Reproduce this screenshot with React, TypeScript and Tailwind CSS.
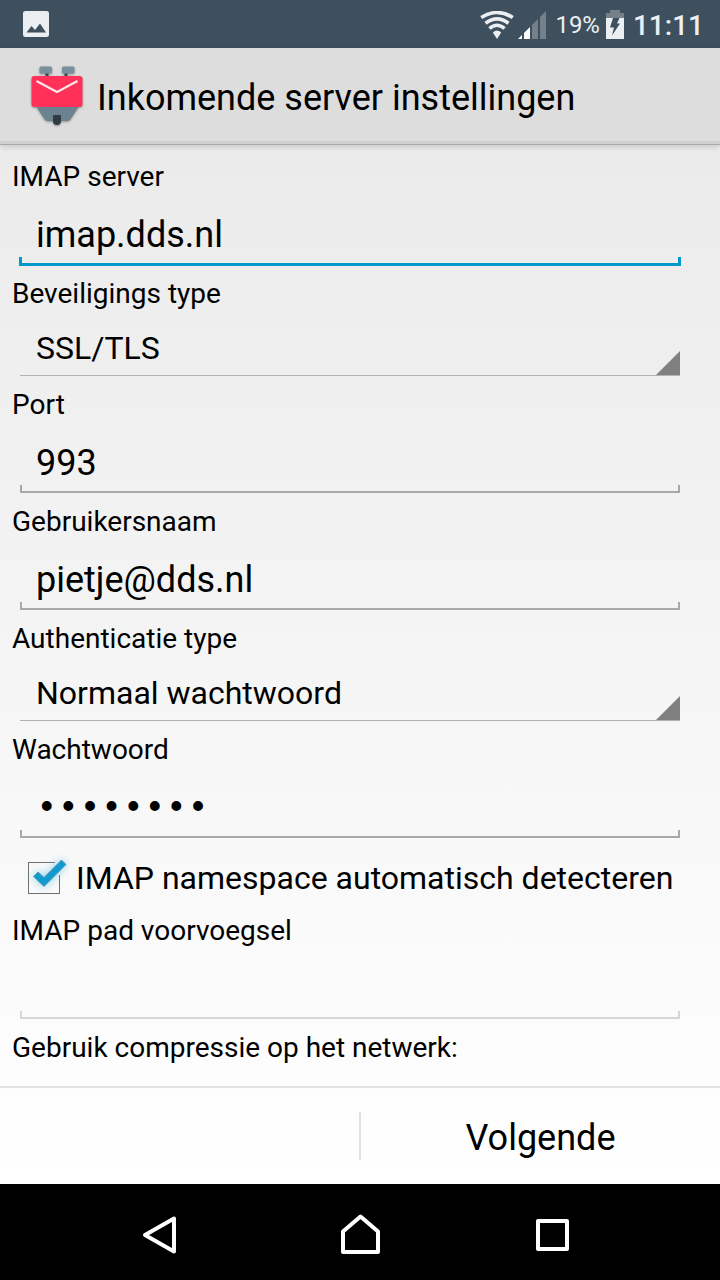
import { useState } from 'react';
import type { HTMLInputTypeAttribute } from 'react';

interface TextFieldProps {
  id: string;
  label: string;
  value: string;
  onChange: (value: string) => void;
  type?: HTMLInputTypeAttribute;
  focused?: boolean;
  disabled?: boolean;
}

interface SpinnerProps {
  id: string;
  label: string;
  value: string;
  options: string[];
  onChange: (value: string) => void;
}

// The focused underline is one pixel thicker and wider on every side
function underlineClass(focused?: boolean, disabled?: boolean) {
  if (focused) return '-mx-px -mb-px h-[9px] border-x-[3px] border-b-[3px] border-[#0099cc]';
  if (disabled) return 'h-2 border-x-2 border-b-2 border-[#d6d6d6]';
  return 'h-2 border-x-2 border-b-2 border-[#a9a9a9]';
}

function TextField({ id, label, value, onChange, type = 'text', focused, disabled }: TextFieldProps) {
  return (
    <div>
      <label htmlFor={id} className="block text-[28px] leading-[33px]">{label}</label>
      <div className="flex h-[84px] flex-col justify-end px-2 pr-7 pb-3">
        <input
          id={id}
          type={type}
          value={value}
          disabled={disabled}
          onChange={(e) => onChange(e.target.value)}
          className={`h-[52px] w-full min-w-0 bg-transparent px-4 pt-2 text-[36px] leading-[44px] outline-none ${type === 'password' ? "font-['Liberation_Mono',monospace]" : ''}`}
        />
        <div className={underlineClass(focused, disabled)} />
      </div>
    </div>
  );
}

function Spinner({ id, label, value, options, onChange }: SpinnerProps) {
  return (
    <div>
      <label htmlFor={id} className="block text-[28px] leading-[33px]">{label}</label>
      <div className="h-[78px] px-2 pr-7 pb-3">
        <div className="relative h-full border-b border-[#b2b2b2]">
          <select
            id={id}
            value={value}
            onChange={(e) => onChange(e.target.value)}
            className="h-full w-full appearance-none bg-transparent px-4 pt-[10px] text-[32px] outline-none"
          >
            {options.map((option) => (
              <option key={option}>{option}</option>
            ))}
          </select>
          <svg viewBox="0 0 24 24" className="pointer-events-none absolute right-0 bottom-0 size-6">
            <path d="M24 0V24H0Z" fill="#808080" />
          </svg>
        </div>
      </div>
    </div>
  );
}

function StatusBar() {
  return (
    <div className="flex h-12 shrink-0 items-center bg-[#3e4f5d] pr-4 pl-5 text-[#eceff1]">
      <svg viewBox="0 0 32 32" className="size-8">
        <rect x="3" y="3" width="26" height="26" rx="2.500" fill="#eceff1" />
        <path d="M6.500 24.500l5-6.500 3.500 4 5-6.500 6 9z" fill="#3e4f5d" />
      </svg>
      <div className="ml-auto flex items-center pt-[2px]">
        <svg viewBox="0 0 34 28" className="h-7 w-[34px]" fill="none" stroke="#eceff1" strokeWidth="3.600">
          <path d="M1.200 6.500Q17-3.500 32.800 6.500" />
          <path d="M5.500 12.200Q17 3.500 28.500 12.200" />
          <path d="M9.500 17.500Q17 11 24.500 17.500" />
          <path d="M12.800 21.500Q17 17.500 21.200 21.500L17 28Z" fill="#eceff1" stroke="none" />
        </svg>
        <svg viewBox="0 0 28 28" className="ml-1 size-7">
          <path d="M0 28L4 24V28Z" fill="#fff" />
          <path d="M6 22L12 16V28H6Z" fill="#fff" />
          <path d="M14 14L20 8V28H14Z" fill="#74808a" />
          <path d="M22 6L28 0V28H22Z" fill="#74808a" />
        </svg>
        <span className="ml-[9px] text-[24px] leading-7">19%</span>
        <svg viewBox="0 0 20 30" className="ml-[5px] h-[30px] w-5">
          <path d="M5 0H15V3H19V8H1V3H5Z" fill="#74808a" />
          <path d="M1 8H19V29H1Z" fill="#eceff1" />
          <path d="M8 8H14.500L12 13.500H15L7 25.500L9 17.500H5Z" fill="#3e4f5d" />
        </svg>
        <span className="ml-2 pt-[2px] text-[28px] leading-8 font-medium">11:11</span>
      </div>
    </div>
  );
}

function MailRobotIcon() {
  return (
    <svg viewBox="0 0 64 64" className="size-16 shrink-0 drop-shadow-[0_1px_1px_rgba(0,0,0,0.35)]">
      <path d="M20.500 8h3v5h-3zM39.500 8h3v5h-3z" fill="#37474f" />
      <rect x="14.500" y="2.500" width="12.500" height="7" rx="1.500" fill="#78909c" />
      <rect x="37" y="2.500" width="12.500" height="7" rx="1.500" fill="#78909c" />
      <path d="M11 42H54L46 54.500Q44.500 57 42 57H23Q20.500 57 19 54.500Z" fill="#6b8390" />
      <rect x="6.500" y="12" width="51" height="31" rx="3" fill="#ff3159" />
      <path d="M11.500 17L32 28 52.500 17" fill="none" stroke="#fbe9ee" strokeWidth="2" />
      <path d="M28 52Q28 51 29 51H35Q36 51 36 52V57Q36 61 32 61Q28 61 28 57Z" fill="#303c43" />
    </svg>
  );
}

function NavigationBar() {
  return (
    <nav className="flex h-24 shrink-0 items-center justify-center gap-32 bg-black pt-[6px]">
      <button type="button" aria-label="Terug">
        <svg viewBox="0 0 64 64" className="size-16" fill="none" stroke="#fff" strokeWidth="4" strokeLinejoin="round">
          <path d="M38 15.500V48.500L9 32Z" />
        </svg>
      </button>
      <button type="button" aria-label="Startscherm">
        <svg viewBox="0 0 64 64" className="size-16" fill="none" stroke="#fff" strokeWidth="4" strokeLinejoin="round">
          <path d="M15 49V28.500L32.500 13.500 50 28.500V49Z" />
        </svg>
      </button>
      <button type="button" aria-label="Recente apps">
        <svg viewBox="0 0 64 64" className="size-16" fill="none" stroke="#fff" strokeWidth="4" strokeLinejoin="round">
          <path d="M18 18H47V46H18Z" />
        </svg>
      </button>
    </nav>
  );
}

export default function App() {
  const [server, setServer] = useState('imap.dds.nl');
  const [security, setSecurity] = useState('SSL/TLS');
  const [port, setPort] = useState('993');
  const [username, setUsername] = useState('pietje@dds.nl');
  const [authType, setAuthType] = useState('Normaal wachtwoord');
  const [password, setPassword] = useState('pietje12');
  const [autoDetect, setAutoDetect] = useState(true);
  const [pathPrefix, setPathPrefix] = useState('');

  return (
    <div className="flex h-screen flex-col bg-linear-to-b from-[#e8e8e8] to-white to-92% font-[Roboto,sans-serif] text-black">
      <StatusBar />

      <header className="z-10 flex h-[97px] shrink-0 items-center border-b border-[#a8a8a8] bg-[#dddddd] pl-[25px] shadow-[inset_0_-3px_0_#d0d0d0,0_2px_6px_rgba(0,0,0,0.15)]">
        <MailRobotIcon />
        <h1 className="ml-2 pt-1 text-[36px] leading-[42px]">Inkomende server instellingen</h1>
      </header>

      <main className="min-h-0 flex-1 overflow-hidden px-3 pt-[15px]">
        <TextField id="server" label="IMAP server" value={server} onChange={setServer} focused />
        <Spinner
          id="security"
          label="Beveiligings type"
          value={security}
          options={['Geen', 'SSL/TLS', 'STARTTLS']}
          onChange={setSecurity}
        />
        <TextField id="port" label="Port" value={port} onChange={setPort} />
        <TextField id="username" label="Gebruikersnaam" value={username} onChange={setUsername} />
        <Spinner
          id="auth-type"
          label="Authenticatie type"
          value={authType}
          options={['Normaal wachtwoord', 'Versleuteld wachtwoord']}
          onChange={setAuthType}
        />
        <TextField id="password" label="Wachtwoord" type="password" value={password} onChange={setPassword} />

        <label className="mb-2 flex h-14 items-center text-[32px] leading-[38px] whitespace-nowrap">
          <span className="relative flex size-16 shrink-0 items-center justify-center">
            <input
              type="checkbox"
              checked={autoDetect}
              onChange={(e) => setAutoDetect(e.target.checked)}
              className="size-8 appearance-none border border-[#707070]"
            />
            {autoDetect && (
              <>
                <svg viewBox="0 0 64 64" className="pointer-events-none absolute inset-0 size-16">
                  <path d="M43 15H49V29H46L43 20Z" fill="#f9fafa" />
                </svg>
                <svg
                  viewBox="0 0 64 64"
                  className="pointer-events-none absolute inset-0 size-16 drop-shadow-[0_0_4px_rgba(51,181,229,0.6)]"
                >
                  <path d="M21.500 30.500L26 26 32 31.500 49.500 14 54 18.500 32 40.500Z" fill="#0f9ad0" stroke="#5c8fa6" strokeWidth="0.800" />
                </svg>
              </>
            )}
          </span>
          IMAP namespace automatisch detecteren
        </label>

        <TextField
          id="path-prefix"
          label="IMAP pad voorvoegsel"
          value={pathPrefix}
          onChange={setPathPrefix}
          disabled={autoDetect}
        />
        <p className="text-[28px] leading-[33px]">Gebruik compressie op het netwerk:</p>
      </main>

      <footer className="flex h-[98px] shrink-0 items-center border-t-2 border-[#e2e2e2]">
        <div className="h-12 flex-1 border-r border-[#e2e2e2]" />
        <button type="button" className="h-12 flex-1 border-l border-[#e2e2e2] pt-1 text-[36px] leading-[44px]">
          Volgende
        </button>
      </footer>

      <NavigationBar />
    </div>
  );
}
